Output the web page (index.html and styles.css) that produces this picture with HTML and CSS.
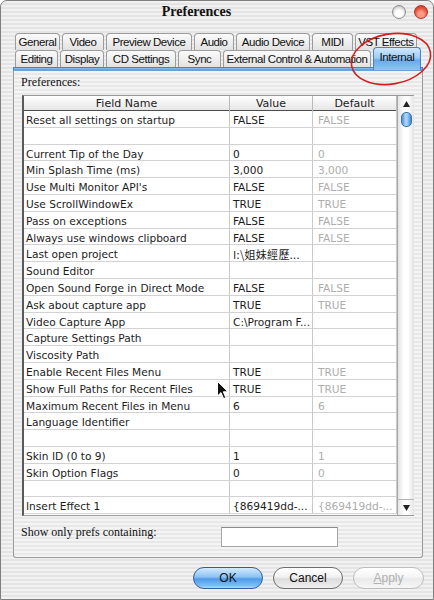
FILE: index.html
```html
<!DOCTYPE html>
<html>
<head>
<meta charset="utf-8">
<link rel="stylesheet" href="styles.css">
</head>
<body>
<div class="window">
  <div class="titlebar">
    <span class="title">Preferences</span>
    <div class="winbtns"><span class="wb wb-min"></span><span class="wb wb-close"></span></div>
  </div>
  <div class="tabs">
    <div class="tabrow">
      <div class="tab w-general">General</div>
      <div class="tab w-video">Video</div>
      <div class="tab w-preview">Preview Device</div>
      <div class="tab w-audio">Audio</div>
      <div class="tab w-audiodev">Audio Device</div>
      <div class="tab w-midi">MIDI</div>
      <div class="tab w-vst">VST Effects</div>
    </div>
    <div class="tabrow">
      <div class="tab w-editing">Editing</div>
      <div class="tab w-display">Display</div>
      <div class="tab w-cd">CD Settings</div>
      <div class="tab w-sync">Sync</div>
      <div class="tab w-ext">External Control &amp; Automation</div>
      <div class="tab w-internal active">Internal</div>
    </div>
  </div>
  <div class="panel">
    <div class="panel-band"></div>
    <div class="panel-label">Preferences:</div>
    <div class="grid">
      <div class="grid-main">
        <div class="ghead">
          <div class="hc">Field Name</div>
          <div class="hc">Value</div>
          <div class="hc">Default</div>
        </div>
        <div class="gbody">
          <div class="row"><div class="c">Reset all settings on startup</div><div class="c">FALSE</div><div class="c d">FALSE</div></div>
          <div class="row"><div class="c"></div><div class="c"></div><div class="c d"></div></div>
          <div class="row"><div class="c">Current Tip of the Day</div><div class="c">0</div><div class="c d">0</div></div>
          <div class="row"><div class="c">Min Splash Time (ms)</div><div class="c">3,000</div><div class="c d">3,000</div></div>
          <div class="row"><div class="c">Use Multi Monitor API's</div><div class="c">FALSE</div><div class="c d">FALSE</div></div>
          <div class="row"><div class="c">Use ScrollWindowEx</div><div class="c">TRUE</div><div class="c d">TRUE</div></div>
          <div class="row"><div class="c">Pass on exceptions</div><div class="c">FALSE</div><div class="c d">FALSE</div></div>
          <div class="row"><div class="c">Always use windows clipboard</div><div class="c">FALSE</div><div class="c d">FALSE</div></div>
          <div class="row"><div class="c">Last open project</div><div class="c cjk">I:\姐妹經歷...</div><div class="c d"></div></div>
          <div class="row"><div class="c">Sound Editor</div><div class="c"></div><div class="c d"></div></div>
          <div class="row"><div class="c">Open Sound Forge in Direct Mode</div><div class="c">FALSE</div><div class="c d">FALSE</div></div>
          <div class="row"><div class="c">Ask about capture app</div><div class="c">TRUE</div><div class="c d">TRUE</div></div>
          <div class="row"><div class="c">Video Capture App</div><div class="c">C:\Program F...</div><div class="c d"></div></div>
          <div class="row"><div class="c">Capture Settings Path</div><div class="c"></div><div class="c d"></div></div>
          <div class="row"><div class="c">Viscosity Path</div><div class="c"></div><div class="c d"></div></div>
          <div class="row"><div class="c">Enable Recent Files Menu</div><div class="c">TRUE</div><div class="c d">TRUE</div></div>
          <div class="row"><div class="c">Show Full Paths for Recent Files</div><div class="c">TRUE</div><div class="c d">TRUE</div></div>
          <div class="row"><div class="c">Maximum Recent Files in Menu</div><div class="c">6</div><div class="c d">6</div></div>
          <div class="row"><div class="c">Language Identifier</div><div class="c"></div><div class="c d"></div></div>
          <div class="row"><div class="c"></div><div class="c"></div><div class="c d"></div></div>
          <div class="row"><div class="c">Skin ID (0 to 9)</div><div class="c">1</div><div class="c d">1</div></div>
          <div class="row"><div class="c">Skin Option Flags</div><div class="c">0</div><div class="c d">0</div></div>
          <div class="row"><div class="c"></div><div class="c"></div><div class="c d"></div></div>
          <div class="row"><div class="c">Insert Effect 1</div><div class="c">{869419dd-...</div><div class="c d">{869419dd-...</div></div>
        </div>
      </div>
      <div class="scrollbar">
        <div class="sb-up"><svg width="7" height="6" viewBox="0 0 7 6"><path d="M3.5 0 L7 6 L0 6 Z" fill="#222"/></svg></div>
        <div class="sb-thumb"></div>
        <div class="sb-track"></div>
        <div class="sb-down"><svg width="7" height="6" viewBox="0 0 7 6"><path d="M0 0 L7 0 L3.5 6 Z" fill="#222"/></svg></div>
      </div>
    </div>
    <div class="filter">
      <span class="filter-label">Show only prefs containing:</span>
      <div class="filter-input"></div>
    </div>
  </div>
  <div class="buttons">
    <div class="btn btn-ok">OK</div>
    <div class="btn btn-cancel">Cancel</div>
    <div class="btn btn-apply"><u>A</u>pply</div>
  </div>
  <svg class="annotation" width="434" height="600" viewBox="0 0 434 600">
    <ellipse cx="391" cy="59" rx="40" ry="25" transform="rotate(-10 391 59)" fill="none" stroke="#d41e1e" stroke-width="1.6"/>
  </svg>
  <svg class="cursor" width="12" height="19" viewBox="0 0 12 19">
    <path d="M0.5 0.5 L0.5 15 L4 11.6 L6.6 17.6 L8.8 16.7 L6.3 10.8 L11 10.8 Z" fill="#111" stroke="#fff" stroke-width="1"/>
  </svg>
</div>
</body>
</html>
```
FILE: styles.css
```css
* { box-sizing: border-box; }
html, body { margin: 0; padding: 0; }
body {
  width: 434px;
  height: 600px;
  overflow: hidden;
  background: #fff;
  font-family: "DejaVu Sans", "Noto Sans CJK TC", sans-serif;
}
.window {
  position: relative;
  width: 434px;
  height: 600px;
  border: 1px solid #7f7f7f;
  border-radius: 7px 7px 0 0;
  background: repeating-linear-gradient(180deg, #f1f1f1 0 2px, #e4e4e4 2px 4px);
  display: flex;
  flex-direction: column;
}
.titlebar {
  height: 21px;
  display: flex;
  align-items: center;
  flex-shrink: 0;
}
.title {
  flex: 1;
  text-align: center;
  font: bold 14px "Liberation Serif", serif;
  color: #111;
  padding-top: 1px;
}
.winbtns {
  display: flex;
  gap: 8px;
  margin-right: 5px;
}
.wb {
  width: 14px;
  height: 14px;
  border-radius: 50%;
}
.wb-min {
  border: 1px solid #8c8c8c;
  background: radial-gradient(circle at 50% 65%, #ffffff 0 35%, #d4d4d4 70%, #a9a9a9 100%);
}
.wb-close {
  border: 1px solid #a8382a;
  background: radial-gradient(circle at 50% 70%, #ff9a86 0 25%, #e4553f 60%, #b82a1c 100%);
}
.tabs {
  padding: 11px 0 0 14px;
  flex-shrink: 0;
}
.tabrow {
  display: flex;
  gap: 2px;
  height: 17px;
  align-items: flex-end;
}
.tab {
  height: 17px;
  border: 1px solid #9c9c9c;
  border-bottom: none;
  border-radius: 4px 4px 0 0;
  background: linear-gradient(#fbfbfb, #e2e2e2);
  font: 11.5px "Liberation Sans", sans-serif;
  letter-spacing: -0.45px;
  color: #111;
  display: flex;
  align-items: center;
  justify-content: center;
  white-space: nowrap;
  overflow: hidden;
}
.tab.active {
  height: 23px;
  margin-bottom: -3px;
  position: relative;
  z-index: 2;
  border-color: #4a7fc0;
  background: linear-gradient(#d2e8fc, #9ccbf5 45%, #6aaaea 55%, #8cc4f4);
  align-items: flex-start;
  padding-top: 3px;
}
.w-general { width: 45px; }
.w-video { width: 42px; }
.w-preview { width: 86px; }
.w-audio { width: 40px; }
.w-audiodev { width: 74px; }
.w-midi { width: 41px; }
.w-vst { width: 62px; }
.w-editing { width: 43px; }
.w-display { width: 44px; }
.w-cd { width: 70px; }
.w-sync { width: 43px; }
.w-ext { width: 148px; }
.w-internal { width: 48px; }

.panel {
  margin: 0 10px 0 12px;
  height: 491px;
  border: 1px solid #9a9a9a;
  border-top: none;
  border-radius: 0 0 3px 3px;
  background: repeating-linear-gradient(180deg, #f4f4f4 0 2px, #e8e8e8 2px 4px);
  display: flex;
  flex-direction: column;
  flex-shrink: 0;
}
.panel-band {
  height: 4px;
  margin: 0 -1px;
  background: linear-gradient(#8fc2f2, #5a9be0);
  border: 1px solid #4a7fc0;
  border-bottom-color: #6d9fd6;
}
.panel-label {
  height: 24px;
  line-height: 20px;
  padding-top: 4px;
  padding-left: 7px;
  font: 12px "Liberation Serif", serif;
  color: #111;
}
.grid {
  margin-left: 8px;
  width: 392px;
  height: 421px;
  display: flex;
  background: #fff;
  border-left: 2px solid #5a5a5a;
  border-top: 1px solid #9a9a9a;
  border-bottom: 1px solid #9a9a9a;
}
.grid-main {
  width: 373px;
  overflow: hidden;
  display: flex;
  flex-direction: column;
}
.ghead {
  display: grid;
  grid-template-columns: 206px 83px 84px;
  height: 15px;
  flex-shrink: 0;
  background: linear-gradient(#ffffff, #e6e6e6);
  border-bottom: 1px solid #4c4c4c;
}
.hc {
  font-size: 11px;
  line-height: 15px;
  text-align: center;
  color: #222;
  border-right: 1px solid #b9b9b9;
}
.gbody {
  overflow: hidden;
  flex: 1;
}
.row {
  display: grid;
  grid-template-columns: 206px 83px 84px;
  height: 16.8px;
  border-bottom: 1px solid #d2d2d2;
}
.c {
  font-size: 10.6px;
  line-height: 14px;
  padding-top: 2px;
  padding-left: 2px;
  color: #1c1c1c;
  white-space: nowrap;
  border-right: 1px solid #c9c9c9;
}
.c + .c { padding-left: 3px; }
.c.d { color: #adadad; padding-left: 5px; }
.cjk { font-family: "Noto Sans CJK TC", "DejaVu Sans", sans-serif; font-size: 11px; letter-spacing: 0.3px; }

.scrollbar {
  width: 17px;
  display: flex;
  flex-direction: column;
  align-items: center;
  border-left: 1px solid #a8a8a8;
  background: linear-gradient(90deg, #e2e2e2, #ffffff 35%, #ffffff 65%, #e2e2e2);
}
.sb-up {
  height: 15px;
  width: 100%;
  display: flex;
  align-items: center;
  justify-content: center;
  background: linear-gradient(90deg, #e6e6e6, #fdfdfd 40%, #fdfdfd 60%, #e6e6e6);
}
.sb-thumb {
  margin-top: 1px;
  width: 11px;
  height: 15px;
  border-radius: 5px;
  border: 1px solid #3b72b8;
  background: linear-gradient(90deg, #4c90dc, #a9d3f8 40%, #a9d3f8 55%, #3f86d6);
}
.sb-track { flex: 1; }
.sb-down {
  height: 16px;
  width: 100%;
  display: flex;
  align-items: center;
  justify-content: center;
  border-top: 1px solid #b4b4b4;
  background: linear-gradient(90deg, #e6e6e6, #fdfdfd 40%, #fdfdfd 60%, #e6e6e6);
}
.filter {
  flex: 1;
  display: flex;
  align-items: flex-start;
  padding-top: 8px;
  padding-left: 7px;
}
.filter-label {
  width: 200px;
  font: 12px/16px "Liberation Serif", serif;
  color: #111;
}
.filter-input {
  margin-top: 3px;
  width: 117px;
  height: 20px;
  background: #fff;
  border: 1px solid #a5a5a5;
  border-top-color: #8a8a8a;
}
.buttons {
  display: flex;
  justify-content: flex-end;
  gap: 10px;
  margin-top: 9px;
  padding-right: 9px;
}
.btn {
  width: 70px;
  height: 22px;
  border-radius: 11px;
  display: flex;
  align-items: center;
  justify-content: center;
  font: 12px "Liberation Sans", sans-serif;
  color: #111;
}
.btn-ok {
  border: 1px solid #2f5f9f;
  background: linear-gradient(#d4eafd, #8cc2f4 45%, #4f9ae8 55%, #7fc0f6 90%, #b0dcfc);
}
.btn-cancel {
  border: 1px solid #6e6e6e;
  background: linear-gradient(#ffffff, #f2f2f2 45%, #dcdcdc 55%, #f0f0f0);
}
.btn-apply {
  width: 71px;
  border: 1px solid #bdbdbd;
  color: #b0b0b0;
  background: linear-gradient(#ffffff, #f5f5f5 45%, #eaeaea 55%, #f6f6f6);
}
.btn-apply u { text-decoration: underline; }
.annotation {
  position: absolute;
  left: -1px;
  top: -1px;
  pointer-events: none;
  z-index: 5;
}
.cursor {
  position: absolute;
  left: 216px;
  top: 380px;
  z-index: 6;
}
```
